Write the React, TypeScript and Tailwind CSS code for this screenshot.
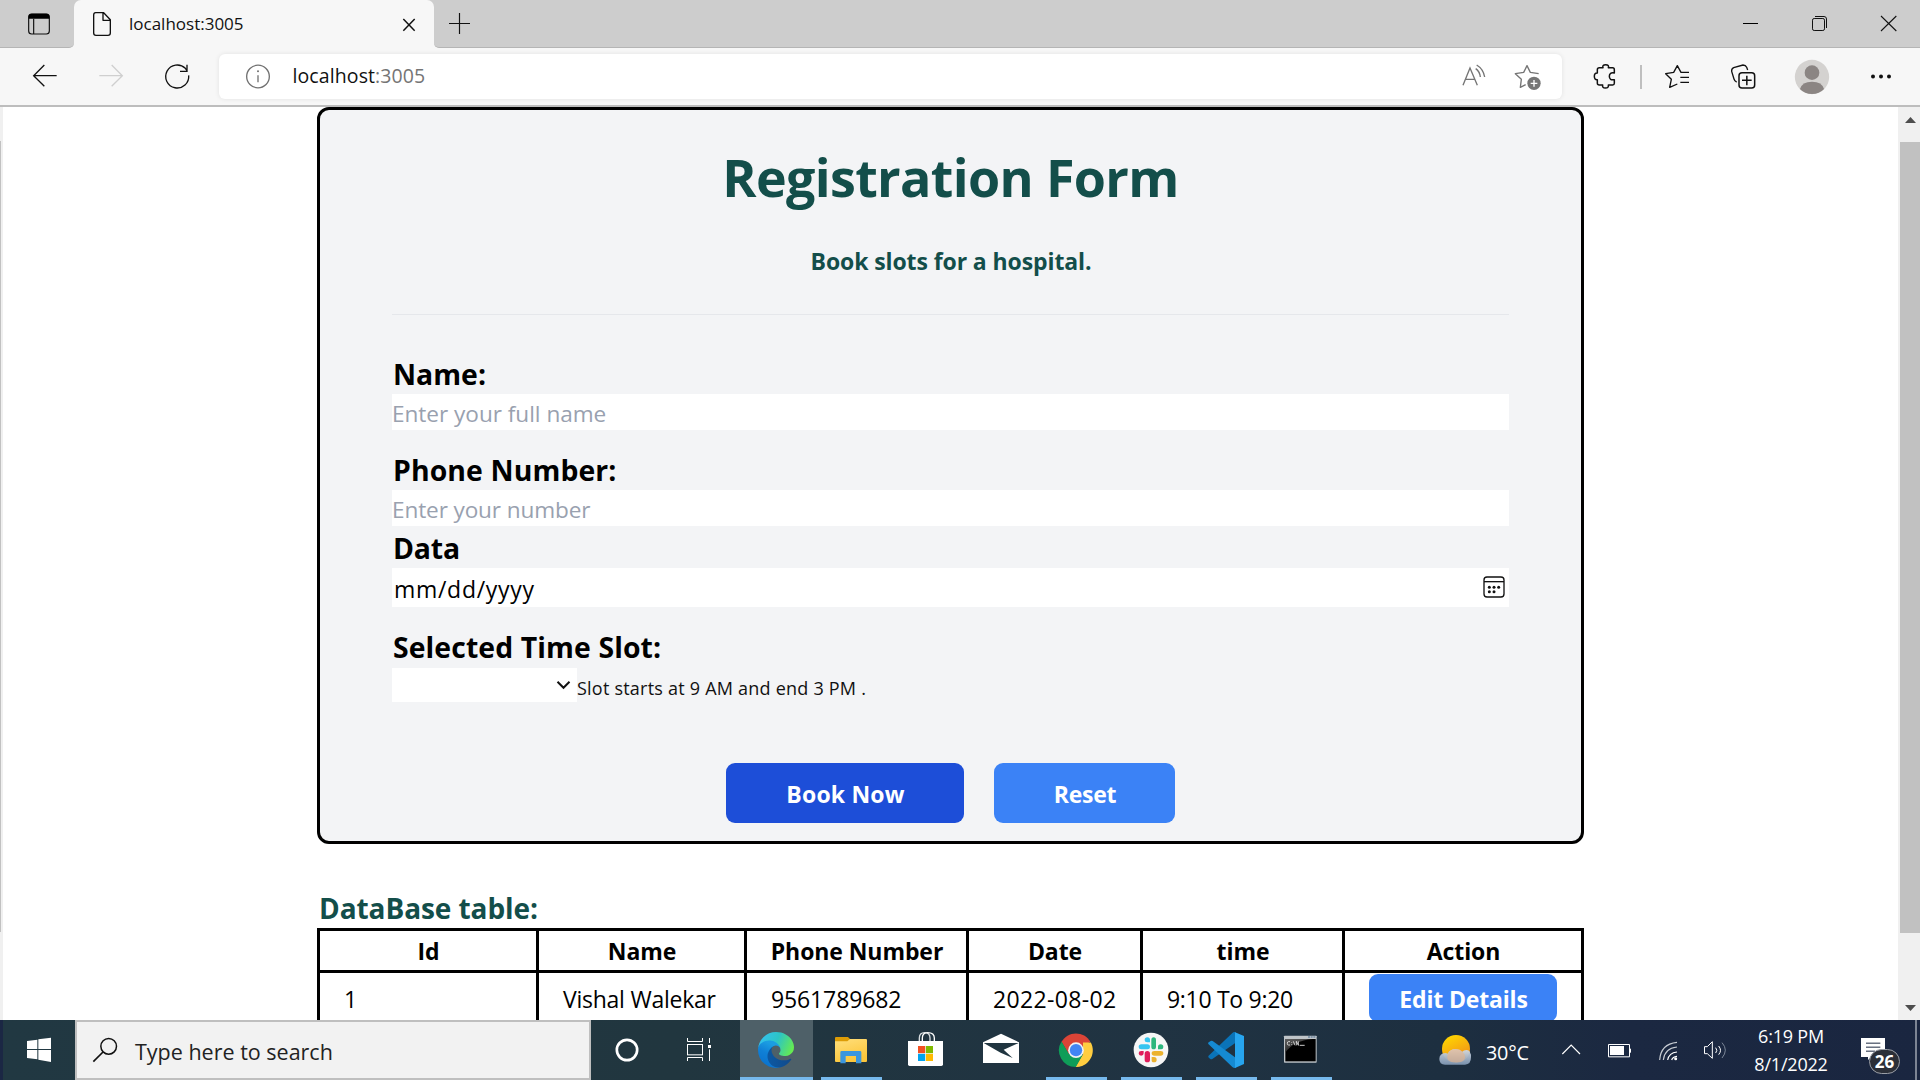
import React from "react";

const FONT = "font-['Open_Sans','Noto_Sans',sans-serif]";

/* Chrome and taskbar glyphs are drawn on a 3-units-per-pixel grid. */
function Glyph({ box, className, children }: { box: string; className: string; children: React.ReactNode }) {
  return (
    <svg viewBox={box} className={`block shrink-0 ${className}`} fill="none">
      {children}
    </svg>
  );
}

function TitleBar() {
  return (
    <div className="flex h-12 shrink-0 bg-[#f7f7f7]">
      <div className="h-12 w-[74px] shrink-0 rounded-br-[5px] border-b border-[#b5b5b5] bg-[#cdcdcd]">
        <Glyph box="0 0 222 141" className="h-[47px] w-[74px]">
          <rect x="86" y="42" width="62" height="60" rx="9" stroke="#111" strokeWidth="3.5" />
          <path d="M86 56V50q0-9 9-9h44q9 0 9 9v6z" fill="#000" />
          <path d="M101 56V102" stroke="#111" strokeWidth="3.5" />
        </Glyph>
      </div>
      <div className="w-[360px] shrink-0 bg-[linear-gradient(#cdcdcd_50%,#f7f7f7_50%)]">
        <div className="flex h-12 rounded-t-[7px] bg-[#f7f7f7]">
          <Glyph box="222 0 162 144" className="h-12 w-[54px]">
            <path d="M287 38H311L331 59V99q0 7-7 7H288q-7 0-7-7V45q0-7 6-7zM309 39V61H331" stroke="#111" strokeWidth="4" strokeLinejoin="round" />
          </Glyph>
          <span className="w-[260px] pl-px pt-[7px] text-[17px] leading-[34px] text-[#111]">localhost:3005</span>
          <Glyph box="0 0 138 144" className="h-12 w-[46px]">
            <path d="M46 57 80 92M80 57 46 92" stroke="#111" strokeWidth="4.500" />
          </Glyph>
        </div>
      </div>
      <div className="flex h-12 grow justify-between rounded-bl-[5px] border-b border-[#b5b5b5] bg-[#cdcdcd]">
        <Glyph box="1302 0 153 141" className="h-[47px] w-[51px]">
          <path d="M1347 70.5h63M1378.500 39v63" stroke="#111" strokeWidth="3.5" />
        </Glyph>
        <div className="flex">
          <Glyph box="948 0 207 141" className="h-[47px] w-[69px]">
            <path d="M1029 70.5h45" stroke="#000" strokeWidth="3" />
          </Glyph>
          <Glyph box="1155 0 207 141" className="h-[47px] w-[69px]">
            <rect x="1237.500" y="55.500" width="36" height="36" rx="5" stroke="#111" strokeWidth="3" />
            <path d="M1245 49.500H1272q7.500 0 7.500 7.500V84" stroke="#111" strokeWidth="3" />
          </Glyph>
          <Glyph box="1362 0 198 141" className="h-[47px] w-[66px]">
            <path d="M1443 48 1489 93M1489 48 1443 93" stroke="#111" strokeWidth="3.200" />
          </Glyph>
        </div>
      </div>
    </div>
  );
}

function ToolBar() {
  return (
    <div className="flex h-[59px] shrink-0 border-b-2 border-[#bdbdbd] bg-[#f7f7f7]">
      <Glyph box="0 144 657 171" className="h-[57px] w-[219px]">
        <path d="M170 227H101M133 195 101 227 133 259" stroke="#111" strokeWidth="4" />
        <path d="M298 227H367M335 195 367 227 335 259" stroke="#cfcfcf" strokeWidth="4" />
        <path d="M566 226A34.500 34.500 0 1 1 556 205L561 212M561 194V214H540" stroke="#111" strokeWidth="4" />
      </Glyph>
      <div className="mt-1.5 flex h-[45px] w-[1343px] shrink-0 rounded-[6px] bg-white shadow-[0_0_5px_rgba(0,0,0,0.09)]">
        <Glyph box="657 162 219 135" className="h-[45px] w-[73px]">
          <circle cx="774" cy="229.500" r="34" stroke="#717171" strokeWidth="4" />
          <path d="M774 226v21" stroke="#717171" strokeWidth="4" />
          <circle cx="774" cy="214" r="3" fill="#717171" />
        </Glyph>
        <span className="grow pl-[0.5px] text-[19.5px] leading-[44px] tracking-[0.1px] text-[#111]">
          localhost<span className="text-[#757575]">:3005</span>
        </span>
        <Glyph box="150 162 336 135" className="h-[45px] w-[112px]">
          <g stroke="#757575" strokeWidth="4">
            <path d="M189 256 210 204 232 256M197 238H225" />
            <path d="M227 206q12 8 14 25M230 195q20 12 24 36" />
            <path d="M377 254 361 262 364 238 346 221 371 217 381 197 391 217 416 221" strokeLinejoin="round" />
          </g>
          <circle cx="402" cy="250" r="20" fill="#757575" />
          <path d="M392 250h20M402 240v20" stroke="#fff" strokeWidth="4" />
        </Glyph>
      </div>
      <Glyph box="486 144 1074 171" className="h-[57px] w-[358px]">
        <path
          d="M592 209Q592 203 598 203H609Q606 194 617 194Q628 194 625 203H638Q643 203 643 209V219Q628 216 628 229Q628 242 643 239V250Q643 255 638 255H625Q627 264 616 264Q606 264 608 255H598Q592 255 592 250V239Q583 240 583 229Q583 218 592 219Z"
          stroke="#111" strokeWidth="4.500" strokeLinejoin="round"
        />
        <path d="M723 195v72" stroke="#bfbfbf" strokeWidth="6" />
        <path d="M867 217H843L832 197 821 217 797 221 814 238 809 262 832 252M841 232H867M841 247H867" stroke="#111" strokeWidth="4" strokeLinejoin="round" />
        <path d="M1010 246q-6-2-8-9L995 214q-1-8 6-11L1029 195q8 0 11 7l3 8" stroke="#111" strokeWidth="4" />
        <rect x="1017" y="218" width="47" height="46" rx="9" stroke="#111" strokeWidth="4.500" />
        <path d="M1026 241h29M1040.500 227v29" stroke="#111" strokeWidth="4.500" />
        <circle cx="1236" cy="231" r="51.500" fill="#d4d2d0" />
        <circle cx="1236" cy="218" r="22" fill="#8b8583" />
        <path d="M1200 267Q1206 245 1236 245Q1266 245 1272 267Q1258 282 1236 282Q1214 282 1200 267Z" fill="#8b8583" />
        <g fill="#111">
          <circle cx="1419" cy="229.500" r="6" />
          <circle cx="1443" cy="229.500" r="6" />
          <circle cx="1467" cy="229.500" r="6" />
        </g>
      </Glyph>
    </div>
  );
}

const LABEL = "block h-10 pl-px text-[28.4px] leading-10 font-bold text-black";

function RegistrationCard() {
  return (
    <form className="h-[737px] w-[1267px] shrink-0 rounded-[12px] border-3 border-black bg-gray-100 px-[72px]">
      <h1 className="mt-[37px] h-[60px] text-center text-[52px] leading-[60px] font-bold tracking-[-0.65px] text-[#134e4a]">Registration Form</h1>
      <h2 className="mt-9 h-9 pl-px text-center text-[23px] leading-9 font-bold tracking-[-0.1px] text-[#134e4a]">Book slots for a hospital.</h2>
      <hr className="mt-[35px] border-gray-200" />
      <label className={`mt-[39px] ${LABEL}`}>Name:</label>
      <div className="h-9 bg-white pt-[3px] text-[22.6px] leading-[34px] tracking-[-0.03px] text-gray-400">Enter your full name</div>
      <label className={`mt-5 tracking-[0.1px] ${LABEL}`}>Phone Number:</label>
      <div className="h-9 bg-white pt-[3px] text-[22.6px] leading-[34px] tracking-[-0.13px] text-gray-400">Enter your number</div>
      <label className={`mt-0.5 tracking-[-0.2px] ${LABEL}`}>Data</label>
      <div className="flex h-[39px] justify-between bg-white">
        <span className="pl-0.5 pt-[3px] text-[23px] leading-9 tracking-[0.7px] text-black">mm/dd/yyyy</span>
        <Glyph box="1137 84 90 117" className="h-[39px] w-[30px]">
          <rect x="1152" y="111" width="60" height="60" rx="9" stroke="#111" strokeWidth="4" />
          <path d="M1152 125h60" stroke="#111" strokeWidth="4" />
          <g fill="#111">
            <circle cx="1168" cy="141.500" r="4.500" />
            <circle cx="1182" cy="141.500" r="4.500" />
            <circle cx="1196" cy="141.500" r="4.500" />
            <circle cx="1168" cy="155" r="4.500" />
            <circle cx="1182" cy="155" r="4.500" />
          </g>
        </Glyph>
      </div>
      <label className={`mt-5 mb-px tracking-[0.1px] ${LABEL}`}>Selected Time Slot:</label>
      <div className="flex h-[34px]">
        <div className="flex w-[185px] justify-end bg-white pr-[6px]">
          <svg viewBox="0 0 15 34" className="h-[34px] w-[15px]" fill="none">
            <path d="M1.500 13.800 7.500 19.800 13.500 13.800" stroke="#111" strokeWidth="2" />
          </svg>
        </div>
        <span className="pt-[5px] text-[18px] leading-[30px] tracking-[0.22px] text-[#111]">Slot starts at 9 AM and end 3 PM .</span>
      </div>
      <div className="mt-[61px] ml-[334px] flex gap-[30px] text-center text-[23px] leading-[60px] font-bold text-white">
        <div className="h-[60px] w-[238px] rounded-[9px] bg-[#1d4ed8] pt-px pl-px tracking-[0.2px]">Book Now</div>
        <div className="h-[60px] w-[181px] rounded-[9px] bg-[#3b82f6] pt-px pl-px tracking-[-0.25px]">Reset</div>
      </div>
    </form>
  );
}

const COLUMNS = ["Id", "Name", "Phone Number", "Date", "time", "Action"];

function BookingTable() {
  return (
    <div className="grid w-[1267px] shrink-0 grid-cols-[219px_208px_222px_174px_202px_239px] border-t-3 border-r-3 border-black text-[23px] text-black">
      {COLUMNS.map((c) => (
        <div key={c} className="h-[42px] border-b-3 border-l-3 border-black pt-px pl-px text-center leading-[39px] font-bold tracking-[-0.08px]">{c}</div>
      ))}
      <div className="h-14 border-l-3 border-black pt-px pl-6 leading-[50px]">1</div>
      <div className="h-14 border-l-3 border-black pt-px pl-6 leading-[50px] tracking-[-0.25px]">Vishal Walekar</div>
      <div className="h-14 border-l-3 border-black pt-px pl-6 leading-[50px] tracking-[-0.12px]">9561789682</div>
      <div className="h-14 border-l-3 border-black pt-px pl-6 leading-[50px] tracking-[0.35px]">2022-08-02</div>
      <div className="h-14 border-l-3 border-black pt-px pl-6 leading-[50px] tracking-[-0.3px]">9:10 To 9:20</div>
      <div className="h-14 border-l-3 border-black pt-px pl-6">
        <div className="h-12 w-[188px] rounded-[9px] bg-[#3b82f6] pt-px pl-px text-center leading-[48px] font-bold tracking-[-0.17px] text-white">Edit Details</div>
      </div>
    </div>
  );
}

function ScrollBar() {
  return (
    <div className="flex w-[22px] shrink-0 flex-col bg-[#f0f0f0]">
      <svg viewBox="0 0 22 35" className="h-[35px] w-[22px]"><path d="M7 16 12.500 10 18 16z" fill="#4d4d4d" /></svg>
      <div className="ml-0.5 h-[791px] w-5 bg-[#c1c1c1]" />
      <svg viewBox="0 0 22 87" className="h-[87px] w-[22px]"><path d="M7 72 12.500 78 18 72z" fill="#4d4d4d" /></svg>
    </div>
  );
}

function TaskSlot({ box, active, open, children }: { box: string; active?: boolean; open?: boolean; children: React.ReactNode }) {
  return (
    <div className="w-[75px] shrink-0 px-px">
      <div className={`flex h-[60px] flex-col items-center overflow-hidden ${active ? "bg-[#4e6068]" : ""}`}>
        <Glyph box={box} className="h-[57px] w-[75px]">{children}</Glyph>
        {active && <div className="h-[3px] w-[73px] bg-[#76b9ed]" />}
        {open && <div className="h-[3px] w-[61px] bg-[#76b9ed]" />}
      </div>
    </div>
  );
}

function TaskBar() {
  return (
    <div className="flex h-[60px] shrink-0 bg-[linear-gradient(90deg,#213842_0%,#21363f_35%,#203342_60%,#1d2f40_75%,#1b2841_85%,#1a2640_100%)] text-white">
      <div className="w-[3px] shrink-0 bg-[#1b2744]" />
      <Glyph box="9 60 216 180" className="h-[60px] w-[72px]">
        <path d="M81 123 112 119V147H81zM115 118 153 113V147H115zM81 150H112V178L81 174zM115 150H153V186L115 179z" fill="#fff" />
      </Glyph>
      <div className="flex h-[60px] w-[516px] shrink-0 border-2 border-[#bfbfbf] bg-[#f2f2f2]">
        <Glyph box="231 66 168 168" className="h-14 w-14">
          <circle cx="326" cy="139" r="23.500" stroke="#111" strokeWidth="4.500" />
          <path d="M309 156 280 185" stroke="#111" strokeWidth="5" />
        </Glyph>
        <span className="pl-0.5 pt-0.5 text-[21.5px] leading-[56px] text-[#222]">Type here to search</span>
      </div>
      <Glyph box="-27 60 219 180" className="h-[60px] w-[73px]">
        <circle cx="81" cy="150" r="30.500" stroke="#fff" strokeWidth="8" />
      </Glyph>
      <Glyph box="192 60 225 180" className="h-[60px] w-[75px]">
        <path d="M262.500 114V124.500H307.500V114M262.500 183V172.500H307.500V183M328.500 114V129M328.500 148V183" stroke="#fff" strokeWidth="3" />
        <rect x="262.500" y="133.500" width="45" height="31" stroke="#fff" strokeWidth="3" />
        <rect x="324" y="135" width="9" height="9" fill="#fff" />
      </Glyph>

      <TaskSlot box="417 60 225 171" active>
        <defs>
          <linearGradient id="e1" x1="0" y1="0.5" x2="1" y2="0.5"><stop offset="0" stopColor="#0c59a4" /><stop offset="1" stopColor="#114a8b" /></linearGradient>
          <linearGradient id="e2" x1="0.6" y1="0.2" x2="0.3" y2="1"><stop offset="0" stopColor="#1b9de2" /><stop offset="0.4" stopColor="#1080d6" /><stop offset="1" stopColor="#0a70cc" /></linearGradient>
          <linearGradient id="e3" x1="0" y1="0.3" x2="1" y2="0.6"><stop offset="0" stopColor="#35c1f1" /><stop offset="0.5" stopColor="#2cc4c6" /><stop offset="1" stopColor="#66eb50" /></linearGradient>
        </defs>
        <g transform="translate(474 96) scale(0.4219) translate(-4.630 -4.920)">
          <path d="M235.680 195.460a93.730 93.730 0 0 1-10.540 4.710 101.870 101.870 0 0 1-35.900 6.460c-47.320 0-88.540-32.550-88.540-74.320A31.480 31.480 0 0 1 117.130 105c-42.800 1.800-53.800 46.400-53.800 72.530 0 73.880 68.090 81.370 82.760 81.370 7.910 0 19.840-2.300 27-4.560l1.310-.44a128.340 128.340 0 0 0 66.600-52.800 4 4 0 0 0-5.320-5.640z" fill="url(#e1)" />
          <path d="M110.340 246.340A79.200 79.200 0 0 1 87.600 225a80.720 80.720 0 0 1 29.530-120c3.120-1.470 8.450-4.130 15.540-4a32.350 32.350 0 0 1 25.690 13 31.880 31.880 0 0 1 6.360 18.660c0-.21 24.460-79.600-80-79.600-43.900 0-80 41.660-80 78.210a130.150 130.150 0 0 0 12.110 56 128 128 0 0 0 156.380 67.110 75.550 75.550 0 0 1-62.780-8z" fill="url(#e2)" />
          <path d="M156.940 153.780c-.81 1.050-3.300 2.500-3.300 5.660 0 2.610 1.700 5.120 4.720 7.230 14.380 10 41.490 8.680 41.560 8.680a59.560 59.560 0 0 0 30.270-8.350 61.380 61.380 0 0 0 30.430-52.880c.26-22.410-8-37.310-11.340-43.910C228.090 28.760 182.350 5 132.620 5a128 128 0 0 0-128 126.200c.48-36.540 36.800-66.050 80-66.050 3.500 0 23.460.34 42 10.070 16.340 8.580 24.900 18.940 30.850 29.210 6.180 10.670 7.280 24.150 7.280 29.520s-2.740 13.330-7.810 19.830z" fill="url(#e3)" />
        </g>
      </TaskSlot>

      <TaskSlot box="642 60 225 171" open>
        <defs><linearGradient id="f1" x1="0" y1="0" x2="0.4" y2="1"><stop offset="0" stopColor="#ffdf7c" /><stop offset="1" stopColor="#fcc63b" /></linearGradient></defs>
        <path d="M705 114q0-3 3-3h36l6 6v10h-45z" fill="#dd9c06" />
        <path d="M705 124H742L750 117H798q3 0 3 3V183q0 3-3 3H708q-3 0-3-3z" fill="url(#f1)" />
        <path d="M721 190V157q0-4 4-4H780q4 0 4 4V190H768V168H737V190z" fill="#3b96de" />
      </TaskSlot>

      <TaskSlot box="867 60 225 171">
        <path d="M958 124V114Q958 98 974 98Q990 98 990 114V124" stroke="#d8dde0" strokeWidth="4" />
        <path d="M967 124V114Q967 98 983 98Q1003 98 1003 114V124" stroke="#fff" strokeWidth="4" />
        <path d="M924 123H1029V193q0 5-5 5H929q-5 0-5-5z" fill="#fff" />
        <rect x="954" y="138" width="21.500" height="21.500" fill="#f25022" />
        <rect x="977.500" y="138" width="21.500" height="21.500" fill="#7fba00" />
        <rect x="954" y="161.500" width="21.500" height="21.500" fill="#00a4ef" />
        <rect x="977.500" y="161.500" width="21.500" height="21.500" fill="#ffb900" />
      </TaskSlot>

      <TaskSlot box="-48 60 225 171">
        <path d="M9 127 63 101 117 127V189H9z" fill="#fff" />
        <path d="M11 129H116L71 149 98 174 62 158z" fill="#203540" />
      </TaskSlot>

      <TaskSlot box="177 60 225 171" open>
        <path d="M288 150 331 125A50 50 0 0 0 244.500 125.500L266 162z" fill="#db4437" />
        <path d="M287 150H335.500A50 50 0 0 1 287 201L310 162z" fill="#ffcd40" />
        <path d="M309 127.500H332.500A50 50 0 0 1 287 201L309 163z" fill="#ffcd40" />
        <path d="M267 162 244.500 124.500A50 50 0 0 0 287.500 201L309 163 288 173z" fill="#0f9d58" />
        <circle cx="288" cy="150.500" r="23.500" fill="#f1f1f1" />
        <circle cx="288" cy="150.500" r="18.500" fill="#4285f4" />
      </TaskSlot>

      <TaskSlot box="402 60 225 171" open>
        <circle cx="513" cy="150" r="52" fill="#f6f6f6" />
        <path d="M514 120q0-8 7-8t7 8v20q0 8-7 8t-7-8zM534 148V141q0-8 8-8t8 8-8 7z" fill="#2eb67d" />
        <path d="M510 127H502q-8 0-8-7.500t8-7.500 8 7.500zM484 133h18q8 0 8 7.500t-8 7.500H484q-8 0-8-7.500t8-7.500z" fill="#36c5f0" />
        <path d="M491 153v7q0 7-7.500 7t-7.500-7 7.500-7zM494 161q0-8 8-8t8 8v18q0 8-8 8t-8-8z" fill="#e01e5a" />
        <path d="M523 153h19q8 0 8 7t-8 7H523q-8 0-8-7t8-7zM515 171h7q8 0 8 8t-8 8-7-8z" fill="#ecb22e" />
      </TaskSlot>

      <TaskSlot box="627 60 225 171" open>
        <path d="M685 168 757 99Q761 95 767 97V128L697 177Q693 179 690 176L685 172z" fill="#0a73b8" />
        <path d="M685 132Q683 129 686 127L692 123Q695 121 698 123L767 173V204Q761 205 757 201z" fill="#158ad2" />
        <path d="M765 97 792 108V192L765 204z" fill="#27a5ef" />
      </TaskSlot>

      <TaskSlot box="852 60 225 171" open>
        <defs><linearGradient id="c1" x1="0" y1="0" x2="0.5" y2="1"><stop offset="0" stopColor="#777" /><stop offset="1" stopColor="#222" /></linearGradient></defs>
        <rect x="912" y="107" width="98" height="81" rx="2" fill="#bfc4c8" />
        <path d="M984 111h6M992 111h6M1000 111h6" stroke="#6f86a0" strokeWidth="4" />
        <rect x="916" y="117" width="91" height="67" fill="#000" />
        <path d="M916 117H998Q940 122 916 158z" fill="url(#c1)" opacity="0.8" />
        <path d="M930 125h-5q-3 0-3 5t3 5h5M935 127v2M935 133v2M940 124l5 12M949 136V124l6 12V124M959 136h15" stroke="#e8e8e8" strokeWidth="2.600" />
      </TaskSlot>

      <div className="flex grow justify-end">
        <Glyph box="90 360 252 180" className="h-[60px] w-[84px]">
          <defs>
            <linearGradient id="s1" x1="0.2" y1="0" x2="0.7" y2="1"><stop offset="0" stopColor="#ffd800" /><stop offset="1" stopColor="#f08a1c" /></linearGradient>
            <linearGradient id="s2" x1="0" y1="0" x2="0" y2="1"><stop offset="0" stopColor="#d5dce6" stopOpacity="0.950" /><stop offset="1" stopColor="#7f97b3" stopOpacity="0.950" /></linearGradient>
          </defs>
          <circle cx="168" cy="447" r="42" fill="url(#s1)" />
          <path d="M135 494q-17 0-17-17t18-18q4 0 7 2 7-14 24-14 13 0 20 8 4-5 12-5 10 0 12 10 3 3 2 12 0 22-18 22z" fill="url(#s2)" />
          <path d="M144 461q7-14 23-14 14 0 20 8 10 8 8 20-4 12-20 12-42 2-31-26z" fill="#e6b48c" opacity="0.600" />
        </Glyph>
        <div className="-ml-[28px] w-[64px] shrink-0 pt-[3px] text-[19.8px] leading-[60px] tracking-[-0.2px]">30°C</div>
        <Glyph box="450 360 585 180" className="h-[60px] w-[195px]">
          <path d="M487 462 513.500 435 540 462" stroke="#fff" strokeWidth="3.500" />
          <path d="M625.500 433.500H688.500V470.500H625.500z" stroke="#fff" strokeWidth="3" />
          <rect x="630" y="438" width="42" height="27" fill="#fff" />
          <rect x="688" y="446" width="5" height="12" fill="#fff" />
          <g stroke="#c8cdd4" strokeWidth="3.500">
            <path d="M779 480Q782 432 831 427" />
            <path d="M790 480Q794 445 831 441" />
            <path d="M803 480Q807 458 831 456" stroke="#fff" />
            <path d="M815 480Q818 470 831 469" stroke="#fff" />
          </g>
          <circle cx="827" cy="476" r="4.500" fill="#fff" />
          <path d="M913.500 440V461H922L937 475V425L922 440z" stroke="#fff" strokeWidth="3" />
          <path d="M947 443q7 8 0 16M956 438q11 13 0 26" stroke="#fff" strokeWidth="3" />
          <path d="M966 428q20 22 0 46" stroke="#7c8798" strokeWidth="3" />
        </Glyph>
        <div className="w-[91px] shrink-0 pt-0.5 pl-px text-center text-[18px] leading-7 tracking-[-0.2px]">
          <div>6:19 PM</div>
          <div>8/1/2022</div>
        </div>
        <div className="relative ml-[6px] w-[73px] shrink-0">
          <Glyph box="1326 360 219 180" className="h-[60px] w-[73px]">
            <path d="M1383 414H1455V471H1414L1404 480V471H1383z" fill="#fff" />
            <path d="M1398 429.500H1441M1398 441.500H1441M1398 453.500H1425" stroke="#1b2841" strokeWidth="3" />
          </Glyph>
          <div className="absolute top-[29px] left-[27px] h-[25px] w-[31px] rounded-full border border-[#9a9ea6] bg-[#2b2f38] text-center text-[17px] leading-[23px] font-bold">26</div>
        </div>
        <div className="mr-[3px] w-0.5 shrink-0 bg-[#7d8594]" />
      </div>
    </div>
  );
}

export default function App() {
  return (
    <div className={`flex h-[1080px] w-[1920px] flex-col overflow-hidden bg-white ${FONT}`}>
      <TitleBar />
      <ToolBar />
      <div className="flex h-[913px] shrink-0 overflow-hidden">
        <div className="w-[3px] shrink-0 bg-[#f0f0f0] pt-[34px]">
          <div className="h-[791px] w-px bg-[#c1c1c1]" />
        </div>
        <div className="flex grow flex-col items-center">
          <RegistrationCard />
          <h2 className="mt-11 h-10 w-[1267px] shrink-0 pl-0.5 text-[28px] leading-10 font-bold tracking-[-0.07px] text-[#134e4a]">DataBase table:</h2>
          <BookingTable />
        </div>
        <ScrollBar />
      </div>
      <TaskBar />
    </div>
  );
}
